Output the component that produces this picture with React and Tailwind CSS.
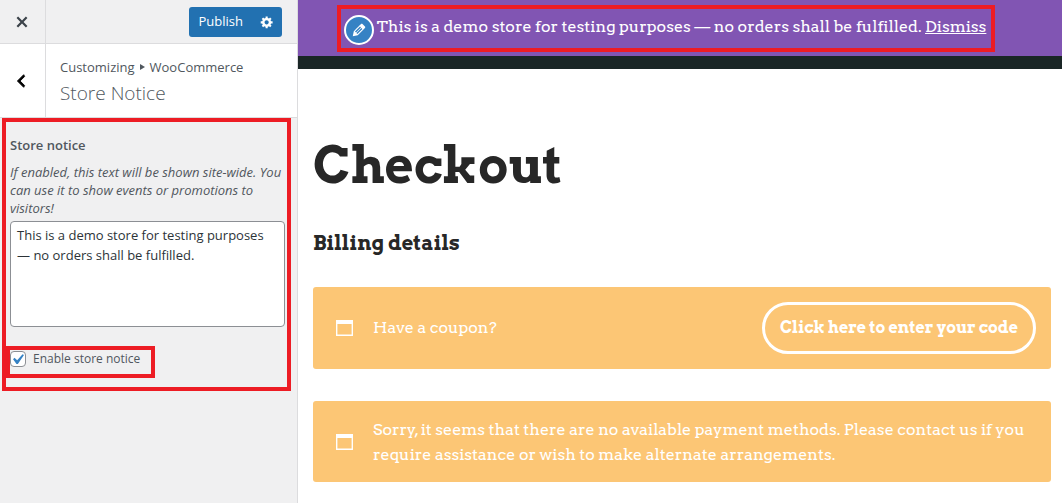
// src/App.jsx
import React, { useState } from "react";

const icons = {
  close:
    "M14.95 6.46L11.41 10l3.54 3.54-1.41 1.41L10 11.42l-3.53 3.53-1.42-1.42L8.58 10 5.05 6.47l1.42-1.42L10 8.58l3.54-3.53z",
  back: "M14 5l-5 5 5 5-1 2-7-7 7-7z",
  gear: "M18 12h-2.18c-.17.7-.44 1.35-.81 1.93l1.54 1.54-2.1 2.1-1.54-1.54c-.58.36-1.23.63-1.91.79V19H8v-2.18c-.68-.16-1.33-.43-1.91-.79l-1.54 1.54-2.12-2.12 1.54-1.54c-.36-.58-.63-1.23-.79-1.91H1V9.03h2.17c.16-.7.44-1.35.8-1.94L2.43 5.55l2.1-2.1 1.54 1.54c.58-.37 1.24-.64 1.93-.81V2h3v2.18c.68.16 1.33.43 1.91.79l1.54-1.54 2.12 2.12-1.54 1.54c.36.59.64 1.24.8 1.94H18V12zm-8.5 1.5c1.66 0 3-1.34 3-3s-1.34-3-3-3-3 1.34-3 3 1.34 3 3 3z",
  edit: "M13.89 3.39l2.71 2.72c.46.46.42 1.24.03 1.64l-8.01 8.02-5.56 1.16 1.16-5.58s7.6-7.63 7.99-8.03c.39-.39 1.22-.39 1.68.07zm-2.73 2.79l-5.59 5.61 1.11 1.11 5.54-5.65zm-2.97 8.23l5.58-5.6-1.07-1.08-5.59 5.6z",
  check: "M14.83 4.89l1.34.94-5.81 8.38H9.02L5.78 9.67l1.34-1.25 2.57 2.4z",
};

function Icon({ name, className }) {
  return (
    <svg viewBox="0 0 20 20" fill="currentColor" className={className} aria-hidden="true">
      <path d={icons[name]} />
    </svg>
  );
}

function WindowIcon() {
  return (
    <svg viewBox="0 0 17 16" className="h-4 w-[17px] shrink-0" aria-hidden="true">
      <path fill="#fff" fillRule="evenodd" d="M0 0h17v16H0zM1.4 4v10.6h14.2V4z" />
    </svg>
  );
}

function Customizer({ notice, setNotice, enabled, setEnabled }) {
  return (
    <aside className="flex w-[298px] shrink-0 flex-col border-r border-[#dcdcde] bg-[#f0f0f1] font-['Segoe_UI','Open_Sans',sans-serif] text-[13px] text-[#50575e]">
      {/* Top bar */}
      <div className="flex h-11 border-b border-[#dcdcde]">
        <button
          aria-label="Close"
          className="flex w-[46px] items-center justify-center border-r border-[#dcdcde] pr-px text-[#3c434a]"
        >
          <Icon name="close" className="size-[22px]" />
        </button>
        <div className="flex flex-1 items-center justify-end pr-[15px]">
          <button className="h-[30px] rounded-l-[3px] bg-[#2271b1] pl-[10px] pr-2 text-white">
            Publish
          </button>
          <button
            aria-label="Publish settings"
            className="flex h-[30px] w-[31px] items-center justify-center rounded-r-[3px] bg-[#2271b1] text-white"
          >
            <Icon name="gear" className="size-[14px]" />
          </button>
        </div>
      </div>

      {/* Section title */}
      <div className="flex h-[74px] border-b border-[#dcdcde] bg-white">
        <button
          aria-label="Back"
          className="flex w-[46px] items-center justify-center border-r border-[#dcdcde] pr-[3px] text-black"
        >
          <Icon name="back" className="size-[18px] stroke-current" />
        </button>
        <div className="flex flex-col justify-center pl-[14px] pt-1">
          <span className="flex items-center gap-[5px] leading-5">
            Customizing
            <svg viewBox="0 0 5 6" className="h-[6px] w-[5px]" aria-hidden="true">
              <path fill="currentColor" d="M0 0l5 3-5 3z" />
            </svg>
            WooCommerce
          </span>
          <h3 className="text-[19px] font-light leading-8">Store Notice</h3>
        </div>
      </div>

      {/* Controls */}
      <div className="ml-[2px] mr-[6px] border-4 border-[#ed1c24] pb-[9px] pt-[11px]">
        <div className="pl-1 pr-[2px]">
          <label htmlFor="store-notice" className="block font-semibold leading-6">
            Store notice
          </label>
          <p id="store-notice-help" className="mt-[6px] italic leading-[18px]">
            If enabled, this text will be shown site-wide. You can use it to
            show events or promotions to visitors!
          </p>
          <textarea
            id="store-notice"
            aria-describedby="store-notice-help"
            value={notice}
            onChange={(e) => setNotice(e.target.value)}
            className="mt-1 block h-[106px] w-full resize-none rounded-[4px] border border-[#8c8f94] bg-white px-[6px] py-[3px] leading-5 text-[#2c3338]"
          />
        </div>
        <label className="mt-[19px] flex h-8 w-[149px] items-center gap-[7px] border-4 border-[#ed1c24] pb-[6px] text-xs">
          <span className="relative size-4">
            <input
              type="checkbox"
              checked={enabled}
              onChange={(e) => setEnabled(e.target.checked)}
              className="peer block size-4 appearance-none rounded-[4px] border border-[#8c8f94] bg-white"
            />
            <Icon
              name="check"
              className="pointer-events-none absolute -left-[3px] -top-[2px] hidden size-[21px] text-[#3582c4] peer-checked:block"
            />
          </span>
          <span className="leading-4">Enable store notice</span>
        </label>
      </div>
    </aside>
  );
}

function Preview({ notice, enabled, onDismiss }) {
  return (
    <main className="min-w-0 flex-1 bg-white font-['Arvo','DejaVu_Serif',serif] text-base text-[#272727]">
      {enabled && (
        <div className="flex min-h-14 justify-center bg-[#8155b3] pb-1 pr-7 pt-[5px] text-white">
          <div className="flex items-center gap-[3px] border-4 border-[#ed1c24] pl-[3px] pr-[5px]">
            <button
              aria-label="Edit store notice"
              className="mt-[3px] flex size-[30px] shrink-0 items-center justify-center rounded-full border-2 border-white bg-[#3582c4]"
            >
              <Icon name="edit" className="size-[18px]" />
            </button>
            <p className="-mt-1 leading-6">
              {notice}{" "}
              <a
                href="#"
                onClick={(e) => {
                  e.preventDefault();
                  onDismiss();
                }}
                className="underline"
              >
                Dismiss
              </a>
            </p>
          </div>
        </div>
      )}
      <div className="h-[13px] bg-[#1a2626]" />

      <div className="pb-5 pl-[15px] pr-[11px] pt-[66px]">
        <h1 className="text-[50px] font-bold leading-[60px]">Checkout</h1>
        <h2 className="mt-[34px] text-xl font-bold leading-7">Billing details</h2>

        <div className="mt-[30px] flex flex-col gap-8 text-white">
          <div className="flex min-h-[82px] items-center gap-5 rounded-[3px] bg-[#fcc675] pl-[23px] pr-[15px]">
            <WindowIcon />
            <span className="flex-1">Have a coupon?</span>
            <button className="h-[52px] rounded-full border-[3px] border-white px-[15px] font-bold">
              Click here to enter your code
            </button>
          </div>
          <div className="flex min-h-[81px] items-center gap-5 rounded-[3px] bg-[#fcc675] py-[15px] pl-[23px] pr-[15px]">
            <WindowIcon />
            <p className="flex-1 leading-[25px]">
              Sorry, it seems that there are no available payment methods.
              Please contact us if you require assistance or wish to make
              alternate arrangements.
            </p>
          </div>
        </div>
      </div>
    </main>
  );
}

export default function App() {
  const [notice, setNotice] = useState(
    "This is a demo store for testing purposes — no orders shall be fulfilled."
  );
  const [enabled, setEnabled] = useState(true);

  return (
    <div className="flex min-h-screen">
      <Customizer
        notice={notice}
        setNotice={setNotice}
        enabled={enabled}
        setEnabled={setEnabled}
      />
      <Preview
        notice={notice}
        enabled={enabled}
        onDismiss={() => setEnabled(false)}
      />
    </div>
  );
}
